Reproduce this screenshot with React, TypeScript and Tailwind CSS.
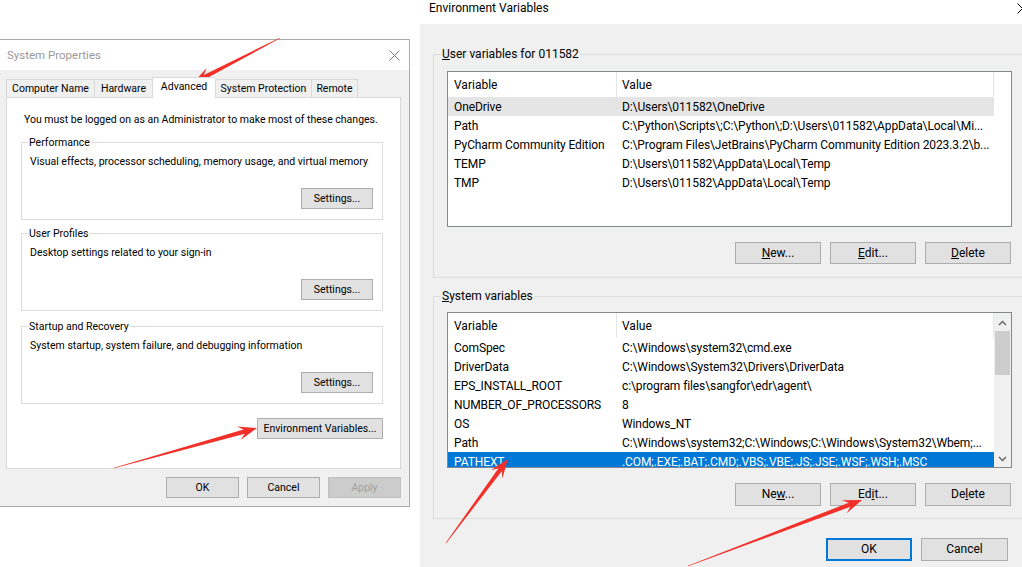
import React from "react";

type Pt = [number, number];

function arrowPoints(tail: Pt, tip: Pt, headLen = 19, headW = 7, shaftW = 2.2, tailW = 0.3) {
  const dx = tip[0] - tail[0];
  const dy = tip[1] - tail[1];
  const len = Math.hypot(dx, dy);
  const ux = dx / len;
  const uy = dy / len;
  const nx = -uy;
  const ny = ux;
  const J = [tip[0] - ux * headLen * 0.7, tip[1] - uy * headLen * 0.7];
  const C = [tip[0] - ux * headLen, tip[1] - uy * headLen];
  const pts = [
    [tail[0] + nx * tailW, tail[1] + ny * tailW],
    [J[0] + nx * shaftW, J[1] + ny * shaftW],
    [C[0] + nx * headW, C[1] + ny * headW],
    tip,
    [C[0] - nx * headW, C[1] - ny * headW],
    [J[0] - nx * shaftW, J[1] - ny * shaftW],
    [tail[0] - nx * tailW, tail[1] - ny * tailW],
  ];
  return pts.map((p) => p.map((v) => v.toFixed(1)).join(",")).join(" ");
}

function Btn({
  children,
  className = "",
  small = false,
  disabled = false,
}: {
  children: React.ReactNode;
  className?: string;
  small?: boolean;
  disabled?: boolean;
}) {
  return (
    <div
      className={`flex items-center justify-center border leading-[15px] ${
        small ? "text-[10.5px]" : "text-[12px]"
      } ${
        disabled
          ? "border-[#bfbfbf] bg-[#cccccc] text-[#a0a0a0]"
          : "border-[#adadad] bg-[#e1e1e1] text-black"
      } ${className}`}
    >
      {children}
    </div>
  );
}

function GroupBox({
  title,
  text,
  className = "",
}: {
  title: string;
  text: string;
  className?: string;
}) {
  return (
    <fieldset className={`border border-[#dcdcdc] ${className}`}>
      <legend className="ml-[6px] px-[1px] text-[10.5px] leading-[15px]">{title}</legend>
      <div className="flex flex-col pl-[8px] pr-[9px] pb-[10px]">
        <div className="mt-[4px] text-[10.5px] leading-[15px]">{text}</div>
        <div className="mt-[19px] flex justify-end">
          <Btn small className="h-[21px] w-[72px]">
            Settings...
          </Btn>
        </div>
      </div>
    </fieldset>
  );
}

type Row = { name: string; value: string; sel?: "gray" | "blue" };

function ListView({ rows, scroll }: { rows: Row[]; scroll?: boolean }) {
  return (
    <div className="flex h-[156px] overflow-hidden border border-[#828790] bg-white">
      <div className="flex w-[546px] shrink-0 flex-col">
        <div className="flex h-[25px] shrink-0 items-center text-[12px]">
          <div className="flex h-full w-[169px] items-center border-r border-[#e5e5e5] pl-[6px]">
            Variable
          </div>
          <div className="flex h-full w-[377px] items-center border-r border-[#e5e5e5] pl-[5px]">
            Value
          </div>
        </div>
        {rows.map((r, i) => (
          <div
            key={i}
            className={`flex h-[19px] shrink-0 items-center whitespace-nowrap text-[12px] tracking-[-0.1px] ${
              r.sel === "gray"
                ? "bg-[#e5e5e5] text-black"
                : r.sel === "blue"
                ? "bg-[#0078d7] text-white"
                : "text-black"
            }`}
          >
            <div className="w-[169px] shrink-0 overflow-hidden pl-[6px]">{r.name}</div>
            <div className="w-[377px] shrink-0 overflow-hidden pl-[5px]">{r.value}</div>
          </div>
        ))}
      </div>
      <div className="flex-1" />
      {scroll && (
        <div className="flex w-[17px] shrink-0 flex-col items-center bg-[#f0f0f0]">
          <svg width="9" height="6" viewBox="0 0 9 6" className="mt-[7px]">
            <path d="M1 5 L4.5 1.5 L8 5" fill="none" stroke="#606060" strokeWidth="1.3" />
          </svg>
          <div className="mt-[5px] h-[44px] w-[15px] bg-[#cdcdcd]" />
          <div className="flex-1" />
          <svg width="9" height="6" viewBox="0 0 9 6" className="mb-[5px]">
            <path d="M1 1 L4.5 4.5 L8 1" fill="none" stroke="#606060" strokeWidth="1.3" />
          </svg>
        </div>
      )}
    </div>
  );
}

const userRows: Row[] = [
  { name: "OneDrive", value: "D:\\Users\\011582\\OneDrive", sel: "gray" },
  { name: "Path", value: "C:\\Python\\Scripts\\;C:\\Python\\;D:\\Users\\011582\\AppData\\Local\\Mi..." },
  {
    name: "PyCharm Community Edition",
    value: "C:\\Program Files\\JetBrains\\PyCharm Community Edition 2023.3.2\\b...",
  },
  { name: "TEMP", value: "D:\\Users\\011582\\AppData\\Local\\Temp" },
  { name: "TMP", value: "D:\\Users\\011582\\AppData\\Local\\Temp" },
];

const sysRows: Row[] = [
  { name: "ComSpec", value: "C:\\Windows\\system32\\cmd.exe" },
  { name: "DriverData", value: "C:\\Windows\\System32\\Drivers\\DriverData" },
  { name: "EPS_INSTALL_ROOT", value: "c:\\program files\\sangfor\\edr\\agent\\" },
  { name: "NUMBER_OF_PROCESSORS", value: "8" },
  { name: "OS", value: "Windows_NT" },
  { name: "Path", value: "C:\\Windows\\system32;C:\\Windows;C:\\Windows\\System32\\Wbem;..." },
  { name: "PATHEXT", value: ".COM;.EXE;.BAT;.CMD;.VBS;.VBE;.JS;.JSE;.WSF;.WSH;.MSC", sel: "blue" },
];

const tabs = [
  { label: "Computer Name", w: "w-[88px]" },
  { label: "Hardware", w: "w-[58px]" },
  { label: "Advanced", w: "w-[63px]", sel: true },
  { label: "System Protection", w: "w-[96px]" },
  { label: "Remote", w: "w-[47px]", last: true },
];

export default function App() {
  return (
    <div className="relative flex h-[567px] w-[1022px] overflow-hidden bg-white font-['Segoe_UI',Roboto,'Noto_Sans',sans-serif] text-black">
      {/* Left: System Properties */}
      <div className="w-[420px] shrink-0">
        <div className="mt-[39px] flex h-[468px] w-[410px] flex-col border-t border-r border-b border-[#aaaaaa] bg-[#f0f0f0]">
          <div className="flex h-[30px] shrink-0 items-center justify-between bg-white pl-[7px] pr-[9px] pt-[1px]">
            <span className="text-[11.5px] text-[#999999]">System Properties</span>
            <svg width="11" height="11" viewBox="0 0 11 11">
              <path d="M0.5 0.5 L10.5 10.5 M10.5 0.5 L0.5 10.5" stroke="#7a7a7a" strokeWidth="1" />
            </svg>
          </div>
          <div className="flex flex-1 flex-col pl-[6px] pr-[8px] pt-[7px]">
            <div className="flex h-[20px] items-end">
              {tabs.map((t) => (
                <div
                  key={t.label}
                  className={`flex items-center justify-center whitespace-nowrap border-l border-t border-[#d9d9d9] text-[10.5px] ${t.w} ${
                    t.last ? "border-r" : ""
                  } ${
                    t.sel
                      ? "relative z-10 -mb-px h-[21px] bg-white pb-[3px]"
                      : "h-[18px] bg-[#f0f0f0]"
                  }`}
                >
                  {t.label}
                </div>
              ))}
            </div>
            <div className="flex h-[372px] flex-col border border-[#d9d9d9] bg-white pl-[14px] pr-[17px] pt-[14px]">
              <div className="ml-[3px] whitespace-nowrap text-[10.5px] leading-[15px]">
                You must be logged on as an Administrator to make most of these changes.
              </div>
              <GroupBox
                className="mt-[8px]"
                title="Performance"
                text="Visual effects, processor scheduling, memory usage, and virtual memory"
              />
              <GroupBox
                className="mt-[6px]"
                title="User Profiles"
                text="Desktop settings related to your sign-in"
              />
              <GroupBox
                className="mt-[8px]"
                title="Startup and Recovery"
                text="System startup, system failure, and debugging information"
              />
              <div className="mt-[14px] flex justify-end">
                <Btn small className="h-[21px] w-[126px]">
                  Environment Variables...
                </Btn>
              </div>
            </div>
            <div className="mt-[8px] flex justify-end gap-[8px]">
              <Btn small className="h-[21px] w-[73px]">
                OK
              </Btn>
              <Btn small className="h-[21px] w-[73px]">
                Cancel
              </Btn>
              <Btn small disabled className="h-[21px] w-[73px]">
                Apply
              </Btn>
            </div>
          </div>
        </div>
      </div>

      {/* Right: Environment Variables */}
      <div className="flex h-full w-[620px] shrink-0 flex-col">
        <div className="flex h-[24px] shrink-0 items-start justify-between bg-white pl-[9px] pt-[1px]">
          <span className="text-[12px] leading-[15px]">Environment Variables</span>
          <svg width="11" height="11" viewBox="0 0 11 11" className="mr-[12px] mt-[2px]">
            <path d="M0.5 0.5 L10.5 10.5 M10.5 0.5 L0.5 10.5" stroke="#000" strokeWidth="1" />
          </svg>
        </div>
        <div className="flex flex-1 flex-col bg-[#f0f0f0]">
          <fieldset className="ml-[13px] mt-[23px] w-[594px] border border-[#dcdcdc]">
            <legend className="ml-[7px] px-[1px] text-[12px] leading-[15px]">
              <u>U</u>ser variables for 011582
            </legend>
            <div className="flex flex-col pl-[13px] pb-[13px]">
              <div className="mt-[9px] w-[565px]">
                <ListView rows={userRows} />
              </div>
              <div className="mt-[15px] flex w-[564px] justify-end gap-[9px]">
                <Btn className="h-[22px] w-[86px]">
                  <span>
                    <u>N</u>ew...
                  </span>
                </Btn>
                <Btn className="h-[22px] w-[86px]">
                  <span>
                    <u>E</u>dit...
                  </span>
                </Btn>
                <Btn className="h-[22px] w-[86px]">
                  <span>
                    <u>D</u>elete
                  </span>
                </Btn>
              </div>
            </div>
          </fieldset>
          <fieldset className="ml-[13px] mt-[11px] w-[594px] border border-[#dcdcdc]">
            <legend className="ml-[7px] px-[1px] text-[12px] leading-[15px]">
              <u>S</u>ystem variables
            </legend>
            <div className="flex flex-col pl-[13px] pb-[12px]">
              <div className="mt-[8px] w-[565px]">
                <ListView rows={sysRows} scroll />
              </div>
              <div className="mt-[15px] flex w-[564px] justify-end gap-[9px]">
                <Btn className="h-[23px] w-[86px]">
                  <span>
                    Ne<u>w</u>...
                  </span>
                </Btn>
                <Btn className="h-[23px] w-[86px]">
                  <span>
                    Ed<u>i</u>t...
                  </span>
                </Btn>
                <Btn className="h-[23px] w-[86px]">
                  <span>
                    De<u>l</u>ete
                  </span>
                </Btn>
              </div>
            </div>
          </fieldset>
          <div className="mt-[19px] flex w-[588px] justify-end gap-[9px]">
            <Btn className="h-[23px] w-[86px] border-2 !border-[#0078d7]">OK</Btn>
            <Btn className="h-[23px] w-[87px]">Cancel</Btn>
          </div>
        </div>
      </div>

      {/* Annotation arrows */}
      <svg
        className="pointer-events-none absolute left-0 top-0"
        width="1022"
        height="567"
        viewBox="0 0 1022 567"
      >
        <g fill="#f2302a">
          <polygon points={arrowPoints([280, 38], [193, 83])} />
          <polygon points={arrowPoints([114, 468], [257, 428])} />
          <polygon points={arrowPoints([446, 543], [508, 459])} />
          <polygon points={arrowPoints([688, 566], [862, 500])} />
        </g>
      </svg>
    </div>
  );
}
